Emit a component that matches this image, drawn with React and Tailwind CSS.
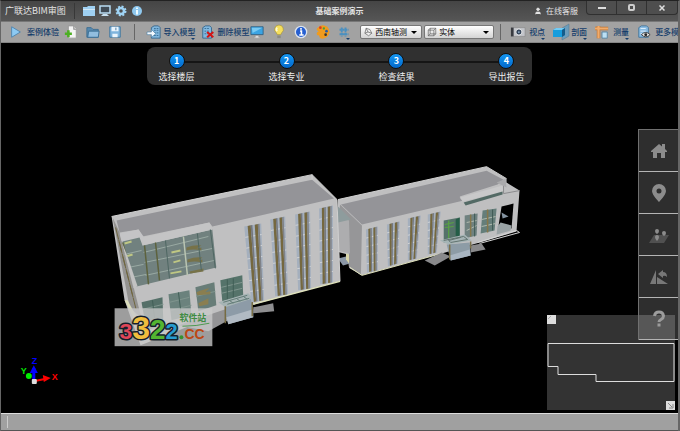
import React from "react";
import { User } from "lucide-react";

const steps = ["选择楼层", "选择专业", "检查结果", "导出报告"];

const strips = [
  [[244, 226], [261, 223], [264, 300], [251, 302]],
  [[270, 219], [285, 216], [288, 294], [275, 296]],
  [[295, 214], [310, 211], [311, 288], [298, 290]],
  [[319, 208], [333, 205], [333, 282], [320, 284]],
  [[366, 229], [378, 226], [378, 270], [367, 272]],
  [[387, 224], [400, 221], [398, 263], [388, 266]],
  [[408, 218], [421, 215], [417, 258], [408, 260]],
  [[428, 214], [441, 211], [437, 252], [428, 254]],
];

const mix = (a, b, t) => [a[0] + (b[0] - a[0]) * t, a[1] + (b[1] - a[1]) * t];

// One tall window column: glass, two brown fins and the floor lines
function WindowStrip({ quad }) {
  const [tl, tr, br, bl] = quad;
  const rows = br[1] - tr[1] > 60 ? 7 : 5;
  const bar = (from, to) =>
    [mix(tl, tr, from), mix(tl, tr, to), mix(bl, br, to), mix(bl, br, from)].join(" ");
  return (
    <g>
      <polygon points={quad.join(" ")} fill="#a4afbd" />
      {Array.from({ length: rows - 1 }, (_, i) => {
        const a = mix(tl, bl, (i + 1) / rows);
        const b = mix(tr, br, (i + 1) / rows);
        return <line key={i} x1={a[0]} y1={a[1]} x2={b[0]} y2={b[1]} stroke="#cfd2d6" strokeWidth="1" />;
      })}
      <polygon points={bar(0.2, 0.38)} fill="#75683f" />
      <polygon points={bar(0.38, 0.48)} fill="#74777d" />
      <polygon points={bar(0.62, 0.8)} fill="#75683f" />
      <polygon points={bar(0.8, 0.9)} fill="#7f8288" />
    </g>
  );
}

function Scene() {
  return (
    <svg className="absolute inset-0 h-full w-full" viewBox="1 42 677 371" role="img" aria-label="BIM">
      {/* right wing */}
      <polygon points="338,199 487,166 507,178 507,182 520,190 517,231 480,242 442,253 362,275 350,268 337,252" fill="#bfbfc0" />
      <polygon points="341,204 487,170 504,179 498,184 460,196 464,200 362,224" fill="#949498" />
      <polygon points="340,204 362,225 361,275 349,266 349,221 339,216" fill="#969698" />
      <polygon points="337,214 349,220 350,253 337,250" fill="#adadaf" />
      <polygon points="338,206 351,219 338,222" fill="#8e9c9d" />
      <polygon points="336,251 348,254 349,268 336,262" fill="#000" />
      <polygon points="338,258 346,256 350,263 343,265" fill="#8b97a6" />
      <path d="M346 253l3 1v9l-3-4z" fill="#d8d5aa" />
      <polyline points="350,267 362,275 442,253" fill="none" stroke="#dfe1bb" strokeWidth="1" />
      <polygon points="460,197 503,185 504,191 463,201" fill="#c9c9ca" />
      <polygon points="464,202 503,191 503,194 466,205" fill="#536a65" />
      <polyline points="504,184 504,193 520,190" fill="none" stroke="#8c8c8e" strokeWidth="1" />
      <polygon points="497,182 506,178 507,187 503,185" fill="#aaaaac" />
      <polygon points="444,220 460,217 460,239 444,242" fill="#55726a" />
      <polygon points="456,219 460,217 460,239 456,235" fill="#245d47" />
      <path d="M445 224l9-2M445 227l9-1M449 220v18" stroke="#59a342" strokeWidth="1.2" />
      <polygon points="465,215 478,213 477,235 465,238" fill="#708280" />
      <polygon points="483,210 497,208 495,230 481,233" fill="#657e7a" />
      <path d="M467 222l10-2M467 230l10-5M482 219l14-3M482 226l14-3" stroke="#b0b9ae" />
      <path d="M471 214v22M488 209v23" stroke="#85764a" strokeWidth="1.5" />
      <path d="M493 209v21M475 213v23" stroke="#3e5a54" />
      <polygon points="502,206 514,203 512,228 499,225" fill="#000" />
      <polygon points="501,222 512,225 511,230 497,234 498,226" fill="#9aa3a5" />
      <polygon points="502,212 509,216 503,218" fill="#8594a1" />
      <polyline points="478,242 517,230 520,232 480,243" fill="none" stroke="#d7d7d7" />
      <polygon points="425,260 442,252 451,256 435,265" fill="#89898b" />
      <polygon points="471,245 482,243 486,249 471,252" fill="#89898b" />
      <polygon points="447,244 470,242 471,255 451,260" fill="#8d9ca6" />
      <polygon points="450,255 470,249 471,255 451,260" fill="#a8b5c1" />
      <polygon points="440,240 465,234 472,240 449,244" fill="#a5b4b5" />
      <polyline points="444,240 464,236 468,239 451,242 449,240 461,237" fill="none" stroke="#62736f" strokeWidth="1" />
      <path d="M450 244v15M471 241v7" stroke="#7b704a" strokeWidth="1.5" />

      {/* left wing */}
      <polygon points="111,216 312,174 337,199 340,281 258,303 222,313 140,345 124,300" fill="#c0c0c1" />
      <polygon points="116,220 312,179 334,198 212,226 209,222 142,236 138,229 119,232" fill="#949498" />
      <polygon points="112,217 119,232 141,318 129,307" fill="#939290" />
      <path d="M115 227l18 72M118 239l18 72" stroke="#6e653f" strokeWidth="1" strokeDasharray="12 3" />
      <polygon points="124,300 127,300 141,326 139,330" fill="#dadcb9" />
      <polygon points="119,233 138,229 143,236 141,245 121,241" fill="#c4c4c6" />
      <polygon points="122,241 139,237 142,245 212,229 216,267 133,287" fill="#71817f" />
      <polygon points="142,237 209,222 212,229 142,245" fill="#c4c4c5" />
      <path d="M124 254l17-4M128 267l15-3M131 277l15-3M143 252l65-16M144 262l68-14M145 275l69-15" stroke="#9aaaa3" strokeWidth="1" />
      <path d="M124 243l7-2M125 256l7-2M171 252l9-2M173 262l7-2M170 273l11-2" stroke="#bfc783" strokeWidth="2" />
      <path d="M186 247q8-3 15-2l-5 3 5-1v3q-8-2-15 0zM187 259q8-3 15-2l-4 3 4-1v3q-8-2-15 0zM189 271l14-3v3l-13 2z" fill="#777248" />
      <path d="M155 242l4 38M144 245l4 39M122 242l12 44" stroke="#5d623d" strokeWidth="1.5" />
      <path d="M183 236l4 39" stroke="#b9c4b1" strokeWidth="1.5" />
      <path d="M210 229l5 39M165 240l4 38M197 233l4 37" stroke="#4e6662" strokeWidth="1" />
      <polygon points="121,241 127,256 137,286 133,288" fill="#c2c2c2" />
      <polygon points="141,302 162,297 163,325 146,330" fill="#557069" />
      <polygon points="168,294 189,290 191,315 171,320" fill="#6b827d" />
      <polygon points="195,287 214,282 216,305 198,311" fill="#687d78" />
      <polygon points="220,280 242,275 243,296 222,301" fill="#55736a" />
      <path d="M142 309l21-5M169 302l20-5M170 310l21-5M196 296l19-5M221 287l21-5M221 293l21-5" stroke="#7f958e" />
      <path d="M196 292q8-3 13-4l-4 4 5-1v3l-13 1zM198 303l10-5v6l-9 2z" fill="#8a7e50" />
      <path d="M152 300l3 26M178 292l3 24M227 279v20M233 278v20" stroke="#405e56" />
      <polyline points="253,304 340,281" stroke="#dfe2bb" strokeWidth="1.5" />
      <polygon points="178,325 225,309 228,320 208,331" fill="#949496" />
      <polygon points="253,307 273,303 274,311 253,313" fill="#8e8e90" />
      <polygon points="224,306 252,298 253,317 228,324" fill="#8d9ba7" />
      <polygon points="226,317 253,309 253,317 228,324" fill="#b1bac3" />
      <polygon points="218,302 248,293 253,298 225,307" fill="#a6b4b4" />
      <path d="M223 302l24-7M227 304l22-6M229 300l4 3M236 298l4 3M243 296l4 3" stroke="#627b76" />
      <path d="M225 306v17M252 298v18" stroke="#766b42" strokeWidth="1.5" />
      {strips.map((quad, i) => (
        <WindowStrip key={i} quad={quad} />
      ))}
      <path d="M312 174v5M337 199l3 82M111 216l201-42 25 25M338 199l149-33 20 12" fill="none" stroke="#d0d0d0" strokeWidth="1" />

      {/* axis gizmo */}
      <path d="M33 380v-12" stroke="#00f" strokeWidth="3" />
      <path d="M29 373l4-8 4 8z" fill="#00f" />
      <path d="M34 381l10-2" stroke="red" strokeWidth="2" />
      <path d="M42 375l8 3-7 4z" fill="red" />
      <circle cx="28" cy="376" r="3" fill="#0e0" />
      <rect x="31" y="379" width="5" height="5" rx="1" fill="#ddd" />
      <g fontFamily="Liberation Sans" fontSize="9" fontWeight="bold">
        <text x="31" y="364" fill="#00f">Z</text>
        <text x="20" y="374" fill="#0e0">Y</text>
        <text x="51" y="380" fill="red">X</text>
      </g>

      {/* watermark */}
      <rect x="114" y="308" width="98" height="38" fill="#c9c9c9" fillOpacity="0.78" />
      <text x="119" y="339" fontFamily="Liberation Sans" fontWeight="bold" stroke="#151f2b" strokeWidth="3" paintOrder="stroke" strokeLinejoin="round">
        <tspan fontSize="23" fill="#df4658">3</tspan>
        <tspan fontSize="32" fill="#efbd3d">3</tspan>
        <tspan fontSize="28" fill="#53b431">2</tspan>
        <tspan fontSize="22" fill="#279bd0">2</tspan>
      </text>
      <circle cx="181" cy="337" r="2" fill="#36922f" />
      <text x="184" y="339" fontFamily="Liberation Sans" fontSize="14" fontWeight="bold" fill="#bd4712">CC</text>
      <text x="179" y="321" fontFamily="Noto Sans CJK SC" fontSize="9" fontWeight="bold" fill="#408b43">软件站</text>
      <path d="M182 326q14 0 27-3" stroke="#4c9a50" fill="none" />
    </svg>
  );
}

function Glyph({ name, className = "h-4 w-4" }) {
  const art = {
    play: <path d="M3 2l10 6-10 6z" fill="#8dcaf3" stroke="#4d82ad" />,
    file: (
      <>
        <path d="M5 1h6l3 3v11H5z" fill="#f4f4f4" stroke="#999" />
        <path d="M11 1v4h3" fill="#bbb" stroke="#999" />
        <path d="M5 6v8M1 10h8" stroke="#4caf22" strokeWidth="3" />
      </>
    ),
    folder: (
      <>
        <path d="M1 3h5l2 2h6v9H1z" fill="#5688ae" stroke="#386b91" />
        <path d="M3 7h12l-1 7H2z" fill="#91bddf" stroke="#386b91" />
      </>
    ),
    save: (
      <>
        <path d="M2 2h12v12H2z" fill="#7fb4dd" stroke="#3e739c" />
        <path d="M4 2h8v5H4zM5 10h6v4H5z" fill="#eaf4fc" />
        <path d="M9 3v3" stroke="#3e739c" />
      </>
    ),
    import: (
      <>
        <path d="M5 3l3-2h5l2 2v12H5z" fill="#81b7de" stroke="#33658c" />
        <path d="M8 4h5M8 6h5M8 9h5M8 12h5" stroke="#356b94" strokeDasharray="2 1" />
        <path d="M0 8h5V5l5 5-5 4v-3H0z" fill="#f5faff" stroke="#477da4" strokeWidth=".7" />
      </>
    ),
    remove: (
      <>
        <path d="M2 3l3-2h5l2 2v12H2z" fill="#81b7de" stroke="#33658c" />
        <path d="M4 4h6M4 7h6M4 10h6" stroke="#356b94" strokeDasharray="2 1" />
        <path d="M7 8l7 6M14 8l-7 6" stroke="#d41515" strokeWidth="2.500" />
      </>
    ),
    monitor: (
      <>
        <path d="M1 2h14v9H1z" fill="#3ba4e3" stroke="#315f80" />
        <path d="M2 3h12L3 9z" fill="#7acaf3" />
        <path d="M6 12h4v2h2v1H4v-1h2z" fill="#ddd" stroke="#888" strokeWidth=".5" />
      </>
    ),
    bulb: (
      <>
        <path d="M8 0a5 5 0 0 0-3 9l1 2h4l1-2a5 5 0 0 0-3-9z" fill="#f5df5d" stroke="#9c8b3a" strokeWidth=".7" />
        <path d="M6 3q-2 2 0 4" stroke="#fffbd5" strokeWidth="2" fill="none" />
        <path d="M6 12h4v3H6z" fill="#8b8b83" />
      </>
    ),
    info: (
      <>
        <circle cx="8" cy="8" r="6.500" fill="#265fd1" stroke="#dce4ef" strokeWidth="1.500" />
        <path d="M7 7h1.500v4M6 11.500h5M8 3.500v2" stroke="#fff" strokeWidth="1.800" fill="none" />
      </>
    ),
    palette: (
      <>
        <path d="M2 3Q7-2 13 2q5 6 0 11-6 5-9 1 0-3-2-2-3-3 1-5-4-2-1-4z" fill="#f09b1e" />
        <circle cx="5" cy="3" r="1.500" fill="#d83a26" />
        <circle cx="9" cy="4" r="1.300" fill="#499f3b" />
        <circle cx="12" cy="7" r="1.500" fill="#235ead" />
        <circle cx="11" cy="11" r="1.500" fill="#333" />
      </>
    ),
    grid: <path d="M5 2v12M10 2v12M2 5h12M2 11h12" stroke="#4b90c0" strokeWidth="2.500" strokeDasharray="3 .7" />,
    diamond: <path d="M5 2l6 2 3 6-5 4-6-4zM5 2l3 6 6 2M8 8l-5 2" fill="#eee" stroke="#555" />,
    cube: <path d="M2 5h9v9H2zM2 5l3-3h9v9l-3 3M11 5l3-3M5 2v9h9M5 11l-3 3" fill="none" stroke="#555" />,
    camera: (
      <>
        <path d="M0 3h16v10H0z" fill="#c3c5ca" stroke="#777" strokeWidth=".5" />
        <path d="M0 3h3v10H0z" fill="#393b40" />
        <circle cx="9" cy="8" r="3.500" fill="#36465b" stroke="#eee" />
        <circle cx="9" cy="8" r="1" fill="#9bb7d2" />
      </>
    ),
    section: (
      <>
        <path d="M9 4l7-4v12l-7 4z" fill="#6c9dbc" stroke="#54768b" strokeWidth=".5" />
        <path d="M0 6l3-2h9v7l-3 2H0z" fill="#169ddd" />
        <path d="M0 6l3-2h9l-3 2z" fill="#74ccf5" />
        <path d="M9 6l3-2v7l-3 2z" fill="#145c8a" />
      </>
    ),
    measure: (
      <>
        <path d="M4 1v14M0 4h15" stroke="#bd7435" strokeWidth="4" />
        <path d="M4 1v14M0 4h15" stroke="#f0ac6d" strokeWidth="2.500" />
        <path d="M8 8h6v7H8z" fill="#bce0f4" stroke="#5683a1" />
      </>
    ),
    more: (
      <>
        <path d="M2 3l3-2h6l2 2v11H2z" fill="#8abbe1" stroke="#3f759d" />
        <path d="M4 4h6M4 7h6M4 10h4" stroke="#e5f3ff" />
        <path d="M5 11q5-5 10 0-5 5-10 0z" fill="#eee" stroke="#333" />
        <circle cx="10" cy="11" r="1.700" fill="#222" />
      </>
    ),
    home: <path d="M8 1l3 2.500V1h3v5l2 2v1h-2v6h-4v-5H6v5H2V9H0V8z" fill="#8c8c8c" />,
    pin: <path fillRule="evenodd" d="M8-1a7 7 0 0 0-7 7C1 10 8 17 8 17s7-7 7-11A7 7 0 0 0 8-1zm0 4.500a2.500 2.500 0 1 1 0 5 2.500 2.500 0 0 1 0-5z" fill="#8c8c8c" />,
    places: (
      <>
        <path d="M3 8h15l-5 8H-2z" fill="#505050" />
        <path d="M6 2a2 2 0 0 1 2 2q0 2-2 3-2-1-2-3a2 2 0 0 1 2-2zM13 4a2 2 0 0 1 2 2q0 2-2 3-2-1-2-3a2 2 0 0 1 2-2zM6 8a2 2 0 0 1 2 2q0 2-2 4-2-2-2-4a2 2 0 0 1 2-2z" fill="#8c8c8c" />
      </>
    ),
    mirror: <path d="M5 1v14H-1zM6 8l11 7H6zM7 5l5-4v2q4 0 4 5-2-2-4-1v2z" fill="#787878" />,
    help: <path d="M3.500 5Q4 1 8 1T12.500 5Q12.500 7 10 8.500 8 9.500 8 11M6.500 14h3" stroke="#9c9c9c" strokeWidth="3" fill="none" />,
  };
  return (
    <svg className={`shrink-0 overflow-visible ${className}`} viewBox="0 0 16 16" aria-hidden="true">
      {art[name]}
    </svg>
  );
}

function Tool({ icon, label, title, menu, size = "h-3.5 w-3.5", gap = "gap-1" }) {
  return (
    <button className={`relative flex h-full shrink-0 items-center text-[8px] font-medium text-[#153d6b] ${gap}`} aria-label={title}>
      <Glyph name={icon} className={size} />
      {label}
      {menu && (
        <span className="absolute right-0 bottom-0 border-x-2 border-t-2 border-x-transparent border-t-[#153d6b]" />
      )}
    </button>
  );
}

function ViewSelect({ icon, value, label, className }) {
  return (
    <label className={`relative flex h-3.5 shrink-0 items-center rounded-xs border border-[#777] bg-linear-to-b from-white to-[#d4d4d4] ${className}`}>
      <Glyph name={icon} className="absolute left-0.5 h-2.5 w-2.5" />
      <select aria-label={label} className="h-full w-full appearance-none pl-3.5 text-[8px] leading-3 text-black outline-none">
        <option>{value}</option>
      </select>
      <span className="pointer-events-none absolute right-1 border-x-3 border-t-3 border-x-transparent border-t-black" />
    </label>
  );
}

function TitleBar() {
  return (
    <header className="grid h-5 shrink-0 grid-cols-[1fr_auto_1fr] items-center bg-linear-to-b from-[#454545] to-[#565656] text-[#e2e2e2]">
      <div className="flex items-center pl-1">
        <h1 className="text-[9px]">广联达BIM审图</h1>
        <span className="mx-2 h-4 w-px bg-[#383838]" />
        <nav className="flex items-center gap-1">
          <button aria-label="打开">
            <svg className="h-3 w-3" viewBox="0 0 12 12">
              <path d="M0 2h4l1-1h7v10H0z" fill="#9fd0f2" />
              <path d="M0 4h12v1H0z" fill="#d0e9fb" />
            </svg>
          </button>
          <button aria-label="显示">
            <svg className="h-3 w-3" viewBox="0 0 12 12">
              <path d="M1 1h10v7H1z" fill="#404b55" stroke="#b8dcf2" strokeWidth="1.500" />
              <path d="M4 9h4l2 2H2z" fill="#c7dfef" />
            </svg>
          </button>
          <button aria-label="设置">
            <svg className="h-3 w-3" viewBox="0 0 12 12">
              <circle cx="6" cy="6" r="4.500" fill="none" stroke="#9fd3f4" strokeWidth="2" strokeDasharray="2 1.530" />
              <circle cx="6" cy="6" r="3" fill="none" stroke="#9fd3f4" strokeWidth="2.500" />
            </svg>
          </button>
          <button aria-label="关于">
            <svg className="h-3 w-3" viewBox="0 0 12 12">
              <circle cx="6" cy="6" r="5" fill="#8fc8ee" />
              <path d="M6 2.500v1.500M6 5v4.500" stroke="#eefaff" strokeWidth="2" />
            </svg>
          </button>
        </nav>
      </div>
      <h2 className="text-[8px] font-bold">基础案例演示</h2>
      <div className="flex h-full items-center justify-end">
        <a href="#service" className="mr-2 flex items-center gap-1 text-[8px]">
          <User className="h-2 w-2 fill-current" />
          在线客服
        </a>
        <div className="flex h-3.5 self-start rounded-b-sm border border-t-0 border-[#303030] bg-[#4e4e4e]">
          <button aria-label="最小化" className="flex w-[30px] items-center justify-center border-r border-[#303030]">
            <span className="h-0.5 w-2 bg-[#ddd]" />
          </button>
          <button aria-label="最大化" className="flex w-[30px] items-center justify-center border-r border-[#303030]">
            <span className="h-[7px] w-[7px] rounded-xs border-2 border-[#ccc]" />
          </button>
          <button aria-label="关闭" className="flex w-[30px] items-center justify-center">
            <svg className="h-1.5 w-1.5" viewBox="0 0 6 6">
              <path d="M.5.5l5 5M5.500.5l-5 5" stroke="#ddd" strokeWidth="1.500" />
            </svg>
          </button>
        </div>
      </div>
    </header>
  );
}

function ToolBar() {
  return (
    <div className="flex h-[22px] shrink-0 items-center overflow-hidden border-t border-[#777] border-b border-b-[#858585] bg-[#a2a2a2] pl-2">
      <div className="mr-2 flex h-4 items-center">
        <Tool icon="play" label="案例体验" />
      </div>
      <div className="flex h-4 items-center gap-2">
        <Tool icon="file" title="新建" />
        <Tool icon="folder" title="打开" />
        <Tool icon="save" title="保存" />
      </div>
      <span className="mx-3 h-4 w-px shrink-0 bg-[#666]" />
      <div className="flex h-4 items-center gap-1.5">
        <Tool icon="import" label="导入模型" menu gap="gap-0.5" />
        <Tool icon="remove" label="删除模型" gap="gap-0.5" />
      </div>
      <div className="mr-2.5 ml-1.5 flex h-4 items-center gap-2">
        <Tool icon="monitor" title="显示" />
        <Tool icon="bulb" title="提示" />
        <Tool icon="info" title="信息" />
        <Tool icon="palette" title="颜色" />
        <Tool icon="grid" title="轴网" menu size="h-3 w-3" />
      </div>
      <div className="flex items-center gap-0.5">
        <ViewSelect icon="diamond" value="西南轴测" label="视图方向" className="w-[62px]" />
        <ViewSelect icon="cube" value="实体" label="显示样式" className="w-[70px]" />
      </div>
      <span className="mr-2.5 ml-1.5 h-4 w-px shrink-0 bg-[#666]" />
      <div className="flex h-4 items-center gap-2">
        <Tool icon="camera" label="视点" menu />
        <Tool icon="section" label="剖面" menu size="h-4 w-4" gap="gap-0.5" />
        <Tool icon="measure" label="测量" menu />
        <Tool icon="more" label="更多模块" />
      </div>
    </div>
  );
}

function Stepper() {
  return (
    <ol className="relative mx-auto mt-1 flex h-[38px] w-[57%] justify-between rounded-lg bg-[#303030] pt-1.5 pr-2 pl-3">
      <li aria-hidden="true" className="absolute top-3.5 right-8 left-8 h-0.5 bg-[#151515]" />
      {steps.map((step, i) => (
        <li key={step} className="relative">
          <button className="flex flex-col items-center gap-0.5 text-[9px] leading-3 text-[#eee]">
            <span className="flex h-4 w-4 items-center justify-center rounded-full border border-[#111] bg-linear-to-b from-[#1597f4] to-[#0568ca] font-bold text-white">
              {i + 1}
            </span>
            {step}
          </button>
        </li>
      ))}
    </ol>
  );
}

function SideBar() {
  const items = [
    ["home", "主页"],
    ["pin", "定位"],
    ["places", "漫游"],
    ["mirror", "翻转"],
    ["help", "帮助"],
  ];
  return (
    <nav className="absolute top-[86px] right-0 flex w-10 flex-col border-t border-l border-[#707070]">
      {items.map(([icon, label]) => (
        <button key={icon} aria-label={label} className="flex h-[42px] items-center justify-center border-b border-[#b5b5b5] bg-white/18">
          <Glyph name={icon} />
        </button>
      ))}
    </nav>
  );
}

function MiniMap() {
  return (
    <div className="absolute right-[3px] bottom-[3px] h-[95px] w-32 bg-white/20">
      <svg className="absolute inset-0 h-full w-full" viewBox="0 0 128 95" aria-hidden="true">
        <path d="M1 28.500h126v38H49v-7H11v-8H1z" fill="none" stroke="#ddd" />
      </svg>
      <button aria-label="收起" className="absolute top-0 left-0 h-[9px] w-[9px] bg-[#ddd]">
        <svg viewBox="0 0 9 9"><path d="M1 4l3-3" stroke="#aaa" /></svg>
      </button>
      <button aria-label="展开" className="absolute right-0 bottom-0 h-[9px] w-[9px] bg-[#ddd]">
        <svg viewBox="0 0 9 9"><path d="M2 2l4 4M7 3v4H3" stroke="#888" fill="none" /></svg>
      </button>
    </div>
  );
}

export default function App() {
  return (
    <div className="flex h-screen flex-col overflow-hidden border-t border-r-2 border-l border-t-[#222] border-r-[#666] border-l-[#666] bg-black font-['Noto_Sans_CJK_SC',sans-serif]">
      <TitleBar />
      <ToolBar />
      <main className="relative min-h-0 flex-1">
        <Scene />
        <Stepper />
        <MiniMap />
        <SideBar />
      </main>
      <footer className="flex h-[18px] shrink-0 items-center border-t border-b border-t-[#ddd] border-b-[#555] bg-[#a0a0a0] pl-1.5">
        <span className="h-3 w-px bg-[#ccc]" />
      </footer>
    </div>
  );
}
